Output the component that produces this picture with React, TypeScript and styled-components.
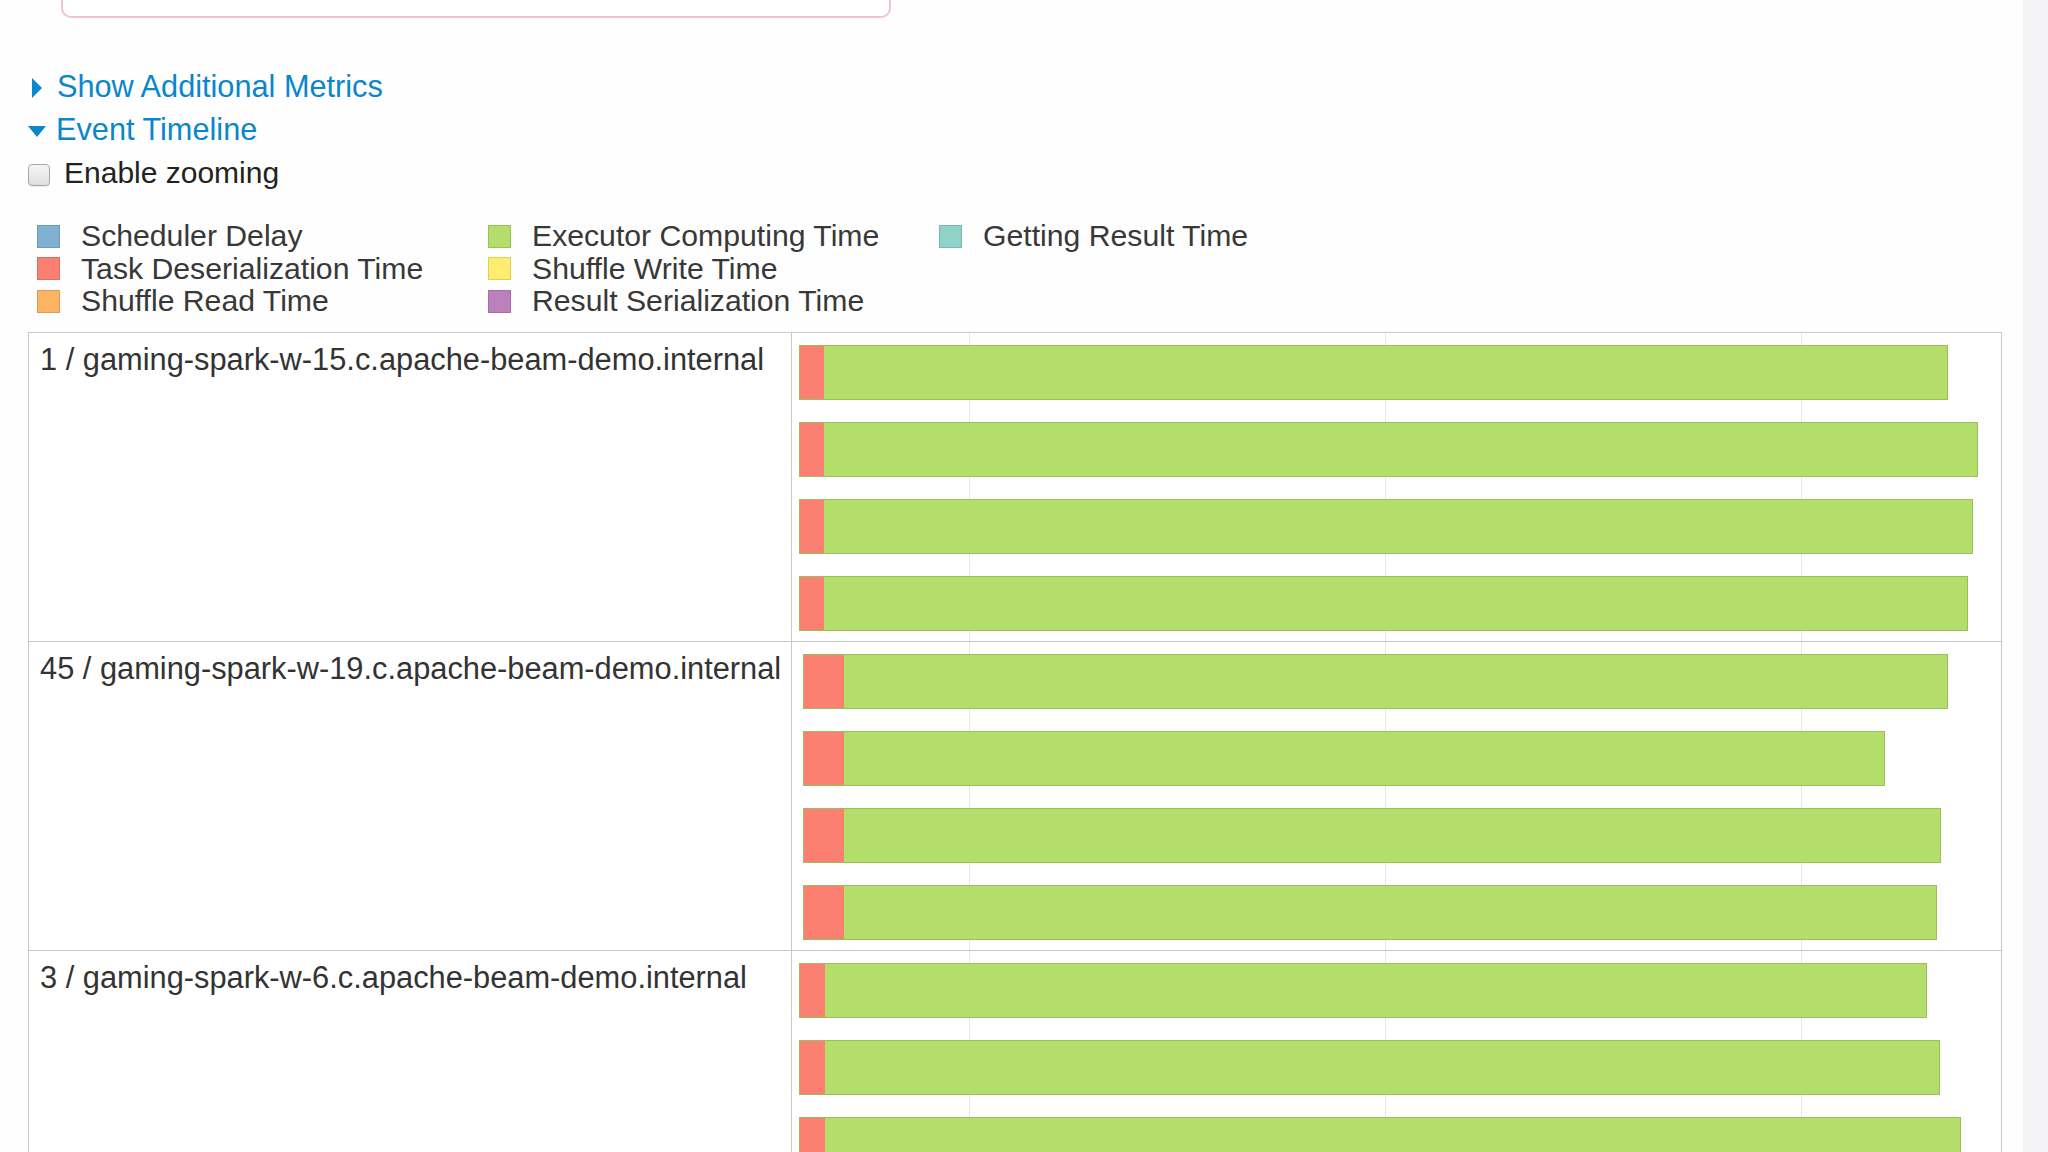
import styled, { createGlobalStyle } from 'styled-components'

const GlobalStyle = createGlobalStyle`
    html, body {
        margin: 0;
        padding: 0;
        background: #fefefe;
    }
    body {
        font-family: "Liberation Sans", Arial, Helvetica, sans-serif;
        color: #333;
    }
`

const Page = styled.div`
    display: flex;
    height: 1152px;
    overflow: hidden;
`

const Main = styled.main`
    flex: 1;
    min-width: 0;
`

const ScrollTrack = styled.div`
    width: 25px;
    flex-shrink: 0;
    background: #f4f3f6;
`

const AlertBox = styled.div`
    margin: -22px 0 0 61px;
    width: 830px;
    height: 40px;
    box-sizing: border-box;
    border: 2px solid #f3c2cc;
    border-radius: 10px;
    background: #fff;
`

const Toggles = styled.div`
    margin-top: 47px;
    margin-left: 28px;
`

const ToggleLine = styled.div`
    display: flex;
    align-items: center;
    height: 43px;
    font-size: 30.7px;
    color: #0a86cc;
    cursor: pointer;
`

const Caret = styled.span<{ $open?: boolean }>`
    display: inline-block;
    width: 0;
    height: 0;
    ${p => p.$open ? `
        margin: 3px 10px 0 0;
        border-left: 9.5px solid transparent;
        border-right: 9.5px solid transparent;
        border-top: 11px solid #0a86cc;
    ` : `
        margin: 2px 15px 0 4px;
        border-top: 10px solid transparent;
        border-bottom: 10px solid transparent;
        border-left: 10px solid #0a86cc;
    `}
`

const CheckLine = styled.label`
    display: flex;
    align-items: center;
    height: 43px;
    font-size: 30px;
    color: #222;
`

const CheckBox = styled.span`
    display: inline-block;
    width: 22px;
    height: 22px;
    box-sizing: border-box;
    margin: 5px 14px 0 0;
    border: 1px solid #a8a8a8;
    border-radius: 4px;
    background: linear-gradient(#f6f6f6, #dedede);
    box-shadow: 0 1px 1px rgba(0, 0, 0, 0.08);
`

const Legend = styled.div`
    display: grid;
    grid-template-columns: repeat(3, 451px);
    grid-template-rows: repeat(3, 32.5px);
    grid-auto-flow: column;
    margin: 26px 0 0 37px;
`

const LegendItem = styled.div`
    display: flex;
    align-items: center;
    gap: 21px;
    font-size: 30.2px;
    color: #383838;
    white-space: nowrap;
`

const Swatch = styled.span<{ $color: string }>`
    width: 23px;
    height: 23px;
    flex-shrink: 0;
    box-sizing: border-box;
    background: ${p => p.$color};
    border: 1px solid rgba(0, 0, 0, 0.13);
`

const Timeline = styled.div`
    margin: 14px 0 0 28px;
    width: 1974px;
    box-sizing: border-box;
    border: 1px solid #c9c9c9;
    border-bottom: none;
    background: #fff;
`

const GroupRow = styled.div`
    display: grid;
    grid-template-columns: 763px 1fr;
    height: 309px;
    box-sizing: border-box;
    border-bottom: 1px solid #c9c9c9;
`

const GroupLabel = styled.div`
    padding: 9px 11px;
    border-right: 1px solid #c9c9c9;
    font-size: 30.8px;
    line-height: 36px;
    color: #333;
    white-space: nowrap;
`

const Lanes = styled.div`
    display: flex;
    flex-direction: column;
    gap: 22.3px;
    padding-top: 12px;
    background: repeating-linear-gradient(
        to right,
        transparent 0 177px,
        #e6e6e6 177px 178px,
        transparent 178px 416px
    );
`

const TaskBar = styled.div`
    display: flex;
    height: 55px;
    flex-shrink: 0;
    box-sizing: border-box;
    border: 1px solid rgba(60, 60, 30, 0.2);
    background: #b3de69;
    overflow: hidden;
`

const Deser = styled.span`
    flex-shrink: 0;
    background: #fb8072;
`

const legendItems = [
    { label: 'Scheduler Delay', color: '#80b1d3' },
    { label: 'Task Deserialization Time', color: '#fb8072' },
    { label: 'Shuffle Read Time', color: '#fdb462' },
    { label: 'Executor Computing Time', color: '#b3de69' },
    { label: 'Shuffle Write Time', color: '#ffed6f' },
    { label: 'Result Serialization Time', color: '#bc80bd' },
    { label: 'Getting Result Time', color: '#8dd3c7' },
]

// [start, end of deserialization, end] in page pixels, lanes start at 793
const LANE_X = 793

const groups = [
    {
        name: '1 / gaming-spark-w-15.c.apache-beam-demo.internal',
        tasks: [[800, 824, 1949], [800, 824, 1979], [800, 824, 1974], [800, 824, 1969]],
    },
    {
        name: '45 / gaming-spark-w-19.c.apache-beam-demo.internal',
        tasks: [[804, 844, 1949], [804, 844, 1886], [804, 844, 1942], [804, 844, 1938]],
    },
    {
        name: '3 / gaming-spark-w-6.c.apache-beam-demo.internal',
        tasks: [[800, 825, 1928], [800, 825, 1941], [800, 825, 1962], [800, 825, 1955]],
    },
]

const App = () => {
    return (
        <Page>
            <GlobalStyle />
            <Main>
                <AlertBox />
                <Toggles>
                    <ToggleLine><Caret />Show Additional Metrics</ToggleLine>
                    <ToggleLine><Caret $open />Event Timeline</ToggleLine>
                    <CheckLine><CheckBox />Enable zooming</CheckLine>
                </Toggles>
                <Legend>
                    {legendItems.map(item => (
                        <LegendItem key={item.label}>
                            <Swatch $color={item.color} />
                            {item.label}
                        </LegendItem>
                    ))}
                </Legend>
                <Timeline>
                    {groups.map(group => (
                        <GroupRow key={group.name}>
                            <GroupLabel>{group.name}</GroupLabel>
                            <Lanes>
                                {group.tasks.map(([start, deserEnd, end], i) => (
                                    <TaskBar
                                        key={i}
                                        style={{ marginLeft: start - LANE_X, width: end - start }}
                                    >
                                        <Deser style={{ width: deserEnd - start }} />
                                    </TaskBar>
                                ))}
                            </Lanes>
                        </GroupRow>
                    ))}
                </Timeline>
            </Main>
            <ScrollTrack />
        </Page>
    )
}

export default App
